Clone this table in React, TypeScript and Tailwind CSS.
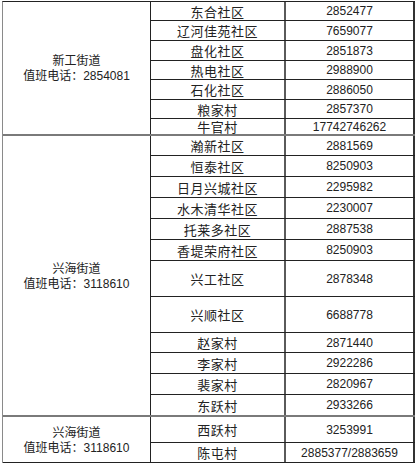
const groups = [
  {
    name: "新工街道",
    phone: "2854081",
    border: "border-b-2 border-[#7a7a7a]",
    rows: [
      { name: "东合社区", tel: "2852477", h: "h-[19px]" },
      { name: "辽河佳苑社区", tel: "7659077", h: "h-[20px]" },
      { name: "盘化社区", tel: "2851873", h: "h-[20px]" },
      { name: "热电社区", tel: "2988900", h: "h-[19px]" },
      { name: "石化社区", tel: "2886050", h: "h-[20px]" },
      { name: "粮家村", tel: "2857370", h: "h-[19px]" },
      { name: "牛官村", tel: "17742746262", h: "h-[15px]" },
    ],
  },
  {
    name: "兴海街道",
    phone: "3118610",
    border: "border-b-2 border-[#7a7a7a]",
    rows: [
      { name: "瀚新社区", tel: "2881569", h: "h-[20px]" },
      { name: "恒泰社区", tel: "8250903", h: "h-[21px]" },
      { name: "日月兴城社区", tel: "2295982", h: "h-[21px]" },
      { name: "水木清华社区", tel: "2230007", h: "h-[21px]" },
      { name: "托莱多社区", tel: "2887538", h: "h-[21px]" },
      { name: "香堤荣府社区", tel: "8250903", h: "h-[21px]" },
      { name: "兴工社区", tel: "2878348", h: "h-[36px]" },
      { name: "兴顺社区", tel: "6688778", h: "h-[36px]" },
      { name: "赵家村", tel: "2871440", h: "h-[20px]" },
      { name: "李家村", tel: "2922286", h: "h-[21px]" },
      { name: "裴家村", tel: "2820967", h: "h-[21px]" },
      { name: "东跃村", tel: "2933266", h: "h-[20px]" },
    ],
  },
  {
    name: "兴海街道",
    phone: "3118610",
    border: "border-b border-[#222]",
    rows: [
      { name: "西跃村", tel: "3253991", h: "h-[26px]" },
      { name: "陈屯村", tel: "2885377/2883659", h: "h-[19px]" },
    ],
  },
];

const cjk = "font-['Noto_Sans_CJK_SC',sans-serif]";
const num = "font-['Liberation_Sans',Arial,sans-serif]";

export default function App() {
  return (
    <div className="w-[415px] h-[466px] bg-white overflow-hidden text-[#222]">
      <div className="mt-px ml-[2px] border-t border-l border-t-[#222] border-l-[#8a8a8a]">
        {groups.map((g, gi) => (
          <div key={gi} className={`flex ${g.border}`}>
            {/* street + duty phone */}
            <div className="w-[148px] border-r border-[#222] flex flex-col items-center justify-center leading-[15px]">
              <span className={`${cjk} text-[12px]`}>{g.name}</span>
              <span className="text-[12px]">
                <span className={cjk}>值班电话：</span>
                <span className={num}>{g.phone}</span>
              </span>
            </div>
            <div className="flex flex-col">
              {g.rows.map((r, ri) => (
                <div
                  key={r.name}
                  className={`flex ${r.h} ${ri < g.rows.length - 1 ? "border-b border-[#222]" : ""}`}
                >
                  <div className={`w-[135px] border-r-2 border-[#5a5a5a] flex items-center justify-center ${cjk} text-[13px] tracking-[0.5px] leading-none`}>
                    {r.name}
                  </div>
                  <div className={`w-[129px] border-r-2 border-[#333] flex items-center justify-center ${num} text-[12px] leading-none`}>
                    {r.tel}
                  </div>
                </div>
              ))}
            </div>
          </div>
        ))}
      </div>
    </div>
  );
}
